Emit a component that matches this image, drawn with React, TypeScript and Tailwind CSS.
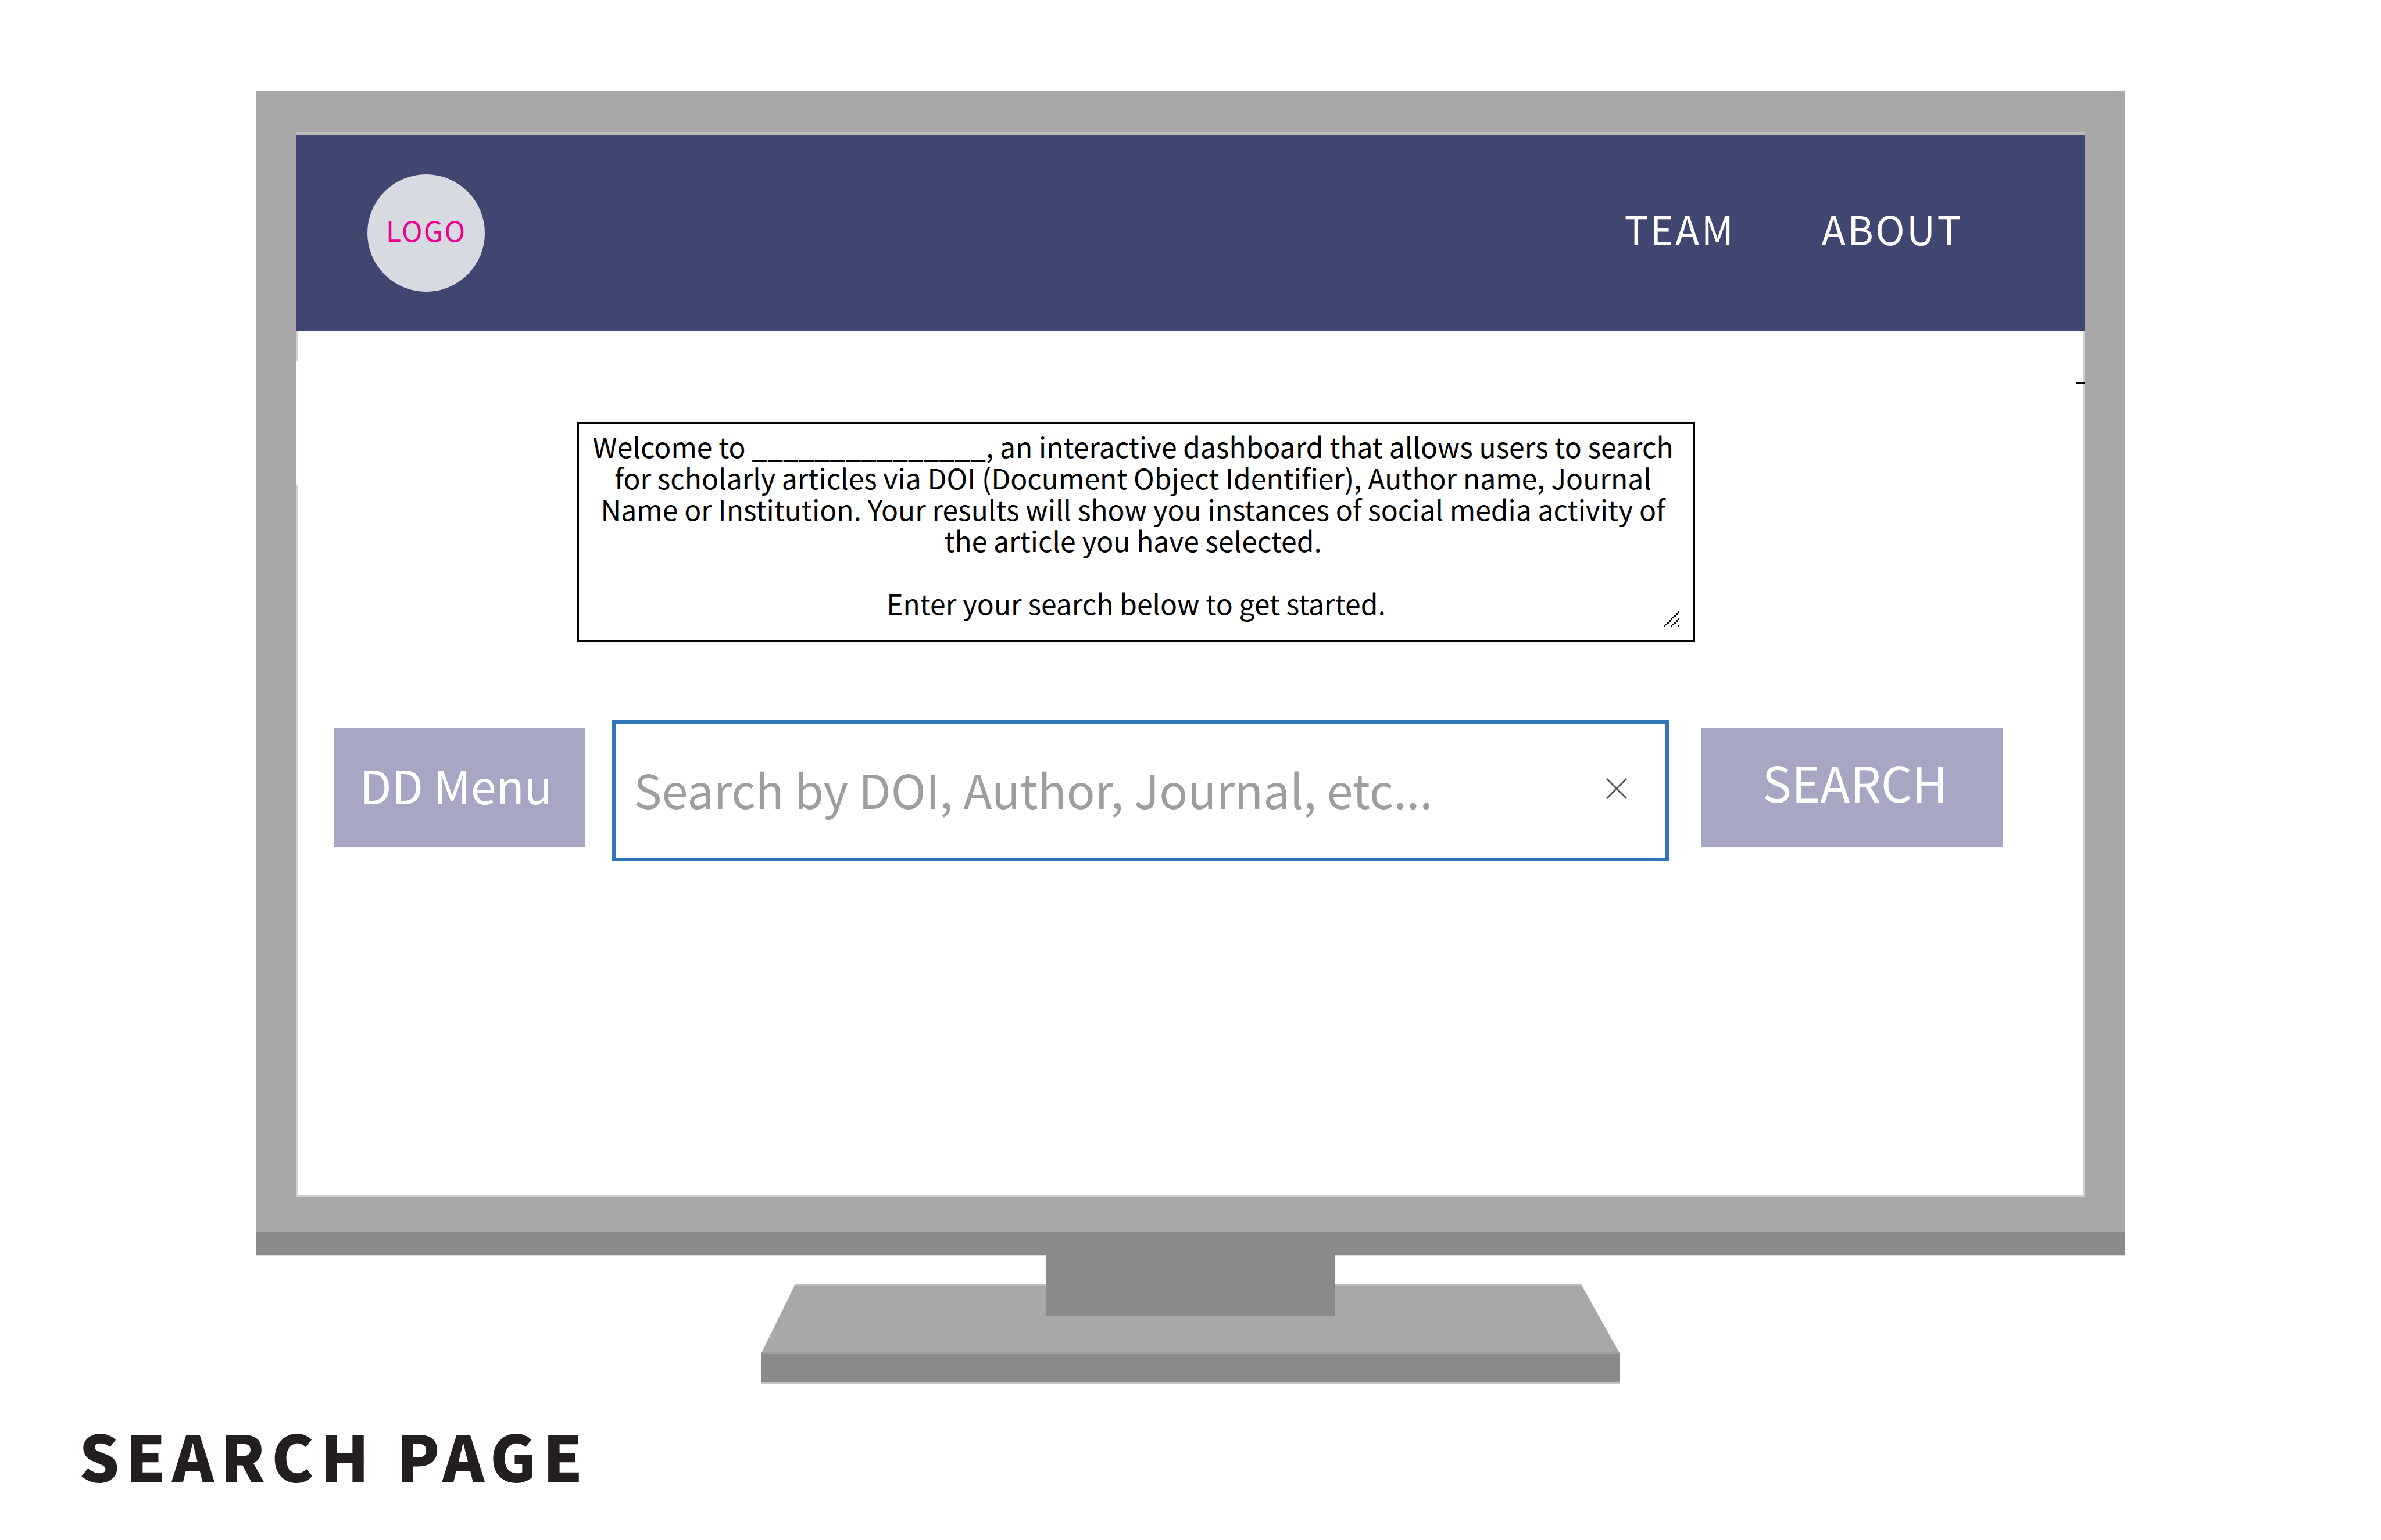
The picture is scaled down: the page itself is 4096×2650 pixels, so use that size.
import { useState } from 'react';

const welcomeText = [
  'Welcome to _______________, an interactive dashboard that allows users to search ',
  'for scholarly articles via DOI (Document Object Identifier), Author name, Journal ',
  'Name or Institution. Your results will show you instances of social media activity of ',
  'the article you have selected. ',
  '',
  'Enter your search below to get started.',
].join('\n');

function Header() {
  return (
    <header className="flex h-[338px] items-center justify-between bg-[#3f4771] pl-[123px] pr-[210px]">
      <a
        href="#home"
        className="flex size-[202px] items-center justify-center rounded-full bg-[#d8dae2] pb-3 text-[48px] leading-none tracking-wider text-[#ec008c]"
      >
        LOGO
      </a>
      <nav className="flex gap-[148px] pb-4 text-[68px] leading-none tracking-wider text-white">
        <a href="#team">TEAM</a>
        <a href="#about">ABOUT</a>
      </nav>
    </header>
  );
}

function ResizeGrip() {
  return (
    <svg
      className="absolute bottom-[26px] right-[27px] size-[27px]"
      viewBox="0 0 9 9"
      shapeRendering="crispEdges"
      aria-hidden="true"
    >
      <path
        d="M0 8h1v1H0zM1 7h1v1H1zM2 6h1v1H2zM3 5h1v1H3zM4 4h1v1H4zM5 3h1v1H5zM6 2h1v1H6zM7 1h1v1H7zM8 0h1v1H8zM4 8h1v1H4zM5 7h1v1H5zM6 6h1v1H6zM7 5h1v1H7zM8 4h1v1H8zM8 8h1v1H8z"
        fill="#000"
      />
    </svg>
  );
}

function Welcome() {
  return (
    <div className="relative ml-[484px] mr-[671px] mt-[157px]">
      <textarea
        aria-label="Welcome message"
        readOnly
        value={welcomeText}
        className="block h-[378px] w-full resize-none overflow-hidden whitespace-pre border-[3px] border-black bg-white px-3 pt-[10px] text-center text-[48px] leading-[54px] text-black outline-none"
      />
      <ResizeGrip />
    </div>
  );
}

function SearchRow() {
  const [query, setQuery] = useState('');
  return (
    <form
      className="mt-[122px] flex items-center pl-[66px] pr-[142px]"
      onSubmit={(e) => e.preventDefault()}
    >
      <select
        aria-label="Search field"
        className="h-[206px] w-[431px] appearance-none rounded-none bg-[#a7a6c3] pb-2 pl-[44px] text-[79px] text-white outline-none"
      >
        <option>DD Menu</option>
      </select>
      <div className="ml-[47px] mt-3 flex h-[243px] flex-1 items-center border-[6px] border-[#3075ba] bg-white pl-[31px] pr-[62px]">
        <input
          type="text"
          aria-label="Search"
          placeholder="Search by DOI, Author, Journal, etc..."
          value={query}
          onChange={(e) => setQuery(e.target.value)}
          className="h-full min-w-0 flex-1 bg-transparent pb-2 text-[81px] text-[#444444] outline-none placeholder:text-[#9e9e9e]"
        />
        <button type="button" aria-label="Clear" onClick={() => setQuery('')} className="mb-2 p-1">
          <svg className="size-[36px]" viewBox="0 0 36 36" aria-hidden="true">
            <path d="M1 1L35 35M35 1L1 35" stroke="#555555" strokeWidth="3" fill="none" />
          </svg>
        </button>
      </div>
      <button
        type="submit"
        className="ml-[55px] h-[206px] w-[519px] bg-[#a7a6c3] pb-5 pl-3 text-[84px] leading-none text-white"
      >
        SEARCH
      </button>
    </form>
  );
}

function Stand() {
  return (
    <svg className="mx-auto -mt-[3px] block h-[222px] w-[1478px]" viewBox="0 0 1478 222" aria-hidden="true">
      <path d="M59 51H1411L1478 171H0z" fill="#a9a7a7" />
      <path d="M59 51H1411L1413 54H57z" fill="#bcbcbc" />
      <path d="M0 168H1478V222H0z" fill="#8a8a8a" />
      <path d="M0 168H1478V171H0z" fill="#a0a0a0" />
      <path d="M0 219H1478V222H0z" fill="#c4c4c4" />
      <path d="M491 0H987V106H491z" fill="#8a8a8a" />
    </svg>
  );
}

export default function App() {
  return (
    <main className="min-h-screen bg-white pt-[156px] font-['Noto_Sans_CJK_SC','Noto_Sans',sans-serif]">
      <section className="mx-auto w-[78.5%]">
        <div className="bg-[#a9a7a7] px-[69px] pb-[60px] pt-[72px]">
          <div className="h-1 bg-[#bcbbbb]" />
          <Header />
          <div className="relative flex flex-col border-x-[3px] border-b-[3px] border-[#d0d0d0] bg-white pb-[575px]">
            <div className="absolute -left-[3px] top-[51px] h-[213px] w-[3px] bg-white" />
            <div className="absolute -right-[3px] top-[88px] h-[3px] w-[15px] bg-black" />
            <div className="-mx-[3px]">
              <Welcome />
              <SearchRow />
            </div>
          </div>
        </div>
        <div className="h-[42px] border-b-[3px] border-[#e0e0e0] bg-[#8a8a8a]" />
        <Stand />
      </section>
      <h1 className="ml-[136px] mt-[67px] text-[109px] font-black leading-none tracking-widest text-[#231f20]">
        SEARCH PAGE
      </h1>
    </main>
  );
}
